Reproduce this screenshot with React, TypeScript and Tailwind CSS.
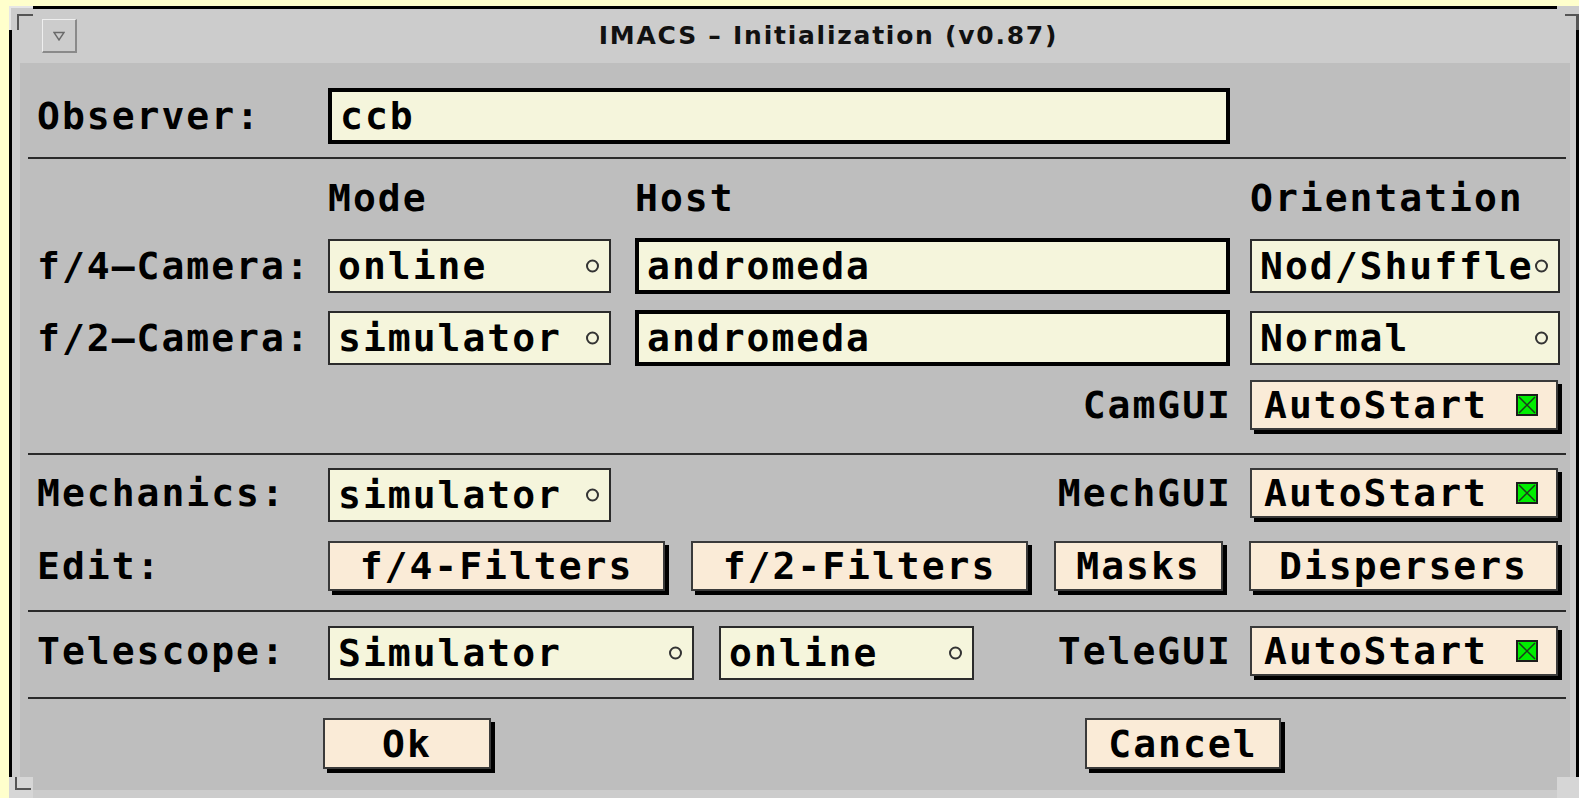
import React from 'react';

// Motif-style option menu: beige field with a small round indicator on the right
const OptionMenu = ({ value, className }: { value: string; className: string }) => (
	<div
		className={`relative h-[54px] shrink-0 bg-[#f5f5dc] border-[2px] border-[#2b2b2b] flex items-center pl-[8px] ${className}`}
	>
		<span className="whitespace-nowrap">{value}</span>
		<span className="absolute right-[10px] top-1/2 -translate-y-1/2 w-[13px] h-[13px] rounded-full border-[2px] border-[#333] bg-[#f5f5dc]" />
	</div>
);

const TextField = ({ value, className }: { value: string; className: string }) => (
	<div
		className={`h-[56px] shrink-0 bg-[#f5f5dc] border-[4px] border-black flex items-center pl-[8px] ${className}`}
	>
		{value}
	</div>
);

const PushButton = ({ label, className }: { label: string; className: string }) => (
	<div
		className={`h-[50px] shrink-0 bg-[#faebd7] border-[2px] border-[#3a3a3a] shadow-[4px_4px_0_#000] flex items-center justify-center ${className}`}
	>
		{label}
	</div>
);

const CheckMark = () => (
	<svg width="22" height="22" viewBox="0 0 22 22">
		<rect x="1" y="1" width="20" height="20" fill="#00ee00" stroke="#1c1c1c" strokeWidth="2" />
		<path d="M3 3 L19 19 M19 3 L3 19" stroke="#1c3a1c" strokeWidth="1.5" />
	</svg>
);

const AutoStart = () => (
	<div className="h-[50px] w-[308px] shrink-0 bg-[#faebd7] border-[2px] border-[#3a3a3a] shadow-[4px_4px_0_#000] flex items-center justify-between pl-[12px] pr-[18px]">
		<span>AutoStart</span>
		<CheckMark />
	</div>
);

const Separator = ({ className }: { className: string }) => (
	<div className={`h-[2px] ml-[8px] mr-[4px] bg-[#2a2a2a] ${className}`} />
);

const Label = ({ text }: { text: string }) => (
	<div className="w-[291px] shrink-0 h-[50px] flex items-center whitespace-nowrap">{text}</div>
);

const GuiLabel = ({ text }: { text: string }) => (
	<div className="flex-1 h-[50px] flex items-center justify-end pr-[18px] whitespace-nowrap">{text}</div>
);

export default function App() {
	return (
		<div className="w-full h-screen bg-[#ffffcc] overflow-hidden">
			<div className="relative ml-[9px] mt-[6px] w-[1570px] h-[792px] bg-[#cccccc] border-l-[3px] border-t-[3px] border-r-[3px] border-black flex flex-col pl-[8px] pr-[6px] pb-[8px]">
				{/* frame corners */}
				<div className="absolute -left-[3px] -top-[3px] w-[24px] h-[24px] bg-[#cccccc] border-l-[2px] border-t-[2px] border-[#e6e6e6]">
					<div className="absolute left-[6px] top-[6px] w-[16px] h-[16px] border-l-[2px] border-t-[2px] border-[#555]" />
				</div>
				<div className="absolute -right-[3px] -top-[3px] w-[22px] h-[24px] bg-[#cccccc]">
					<div className="absolute right-[0px] top-[8px] w-[14px] h-[16px] border-r-[3px] border-t-[2px] border-[#555]" />
				</div>
				<div className="absolute -left-[3px] bottom-0 w-[24px] h-[21px] bg-[#d6d6d6]">
					<div className="absolute left-[6px] top-0 w-[16px] h-[13px] border-l-[2px] border-b-[2px] border-[#555]" />
				</div>
				<div className="absolute -right-[3px] bottom-0 w-[22px] h-[21px] bg-[#d6d6d6]" />

				{/* title bar */}
				<div className="h-[54px] shrink-0 flex items-center">
					<div className="ml-[22px] w-[35px] h-[34px] border-t border-l border-[#efefef] border-r-[2px] border-b-[2px] border-r-[#8a8a8a] border-b-[#8a8a8a] flex items-center justify-center">
						<svg width="12" height="10" viewBox="0 0 12 10">
							<path d="M1 1.5 H11 L6 9 Z" fill="none" stroke="#6a6a6a" strokeWidth="1.4" />
						</svg>
					</div>
					<div className="flex-1 pl-[10px] text-center font-['DejaVu_Sans',sans-serif] font-bold text-[25px] tracking-[1.75px] text-[#111]">
						IMACS – Initialization (v0.87)
					</div>
				</div>

				{/* dialog body */}
				<div className="flex-1 bg-[#bebebe] flex flex-col font-['DejaVu_Sans_Mono',monospace] font-bold text-[38px] leading-[38px] tracking-[2px] text-black">
					<div className="mt-[25px] flex items-center pl-[17px]">
						<div className="w-[291px] shrink-0">Observer:</div>
						<TextField value="ccb" className="w-[902px]" />
					</div>

					<Separator className="mt-[13px]" />

					<div className="mt-[20px] h-[38px] flex pl-[17px]">
						<div className="w-[291px] shrink-0" />
						<div className="w-[307px] shrink-0">Mode</div>
						<div className="w-[615px] shrink-0">Host</div>
						<div>Orientation</div>
					</div>

					<div className="mt-[21px] flex items-center pl-[17px]">
						<div className="w-[291px] shrink-0 whitespace-nowrap">f/4–Camera:</div>
						<OptionMenu value="online" className="w-[283px]" />
						<TextField value="andromeda" className="ml-[24px] w-[595px]" />
						<OptionMenu value="Nod/Shuffle" className="ml-[20px] w-[310px]" />
					</div>

					<div className="mt-[16px] flex items-center pl-[17px]">
						<div className="w-[291px] shrink-0 whitespace-nowrap">f/2–Camera:</div>
						<OptionMenu value="simulator" className="w-[283px]" />
						<TextField value="andromeda" className="ml-[24px] w-[595px]" />
						<OptionMenu value="Normal" className="ml-[20px] w-[310px]" />
					</div>

					<div className="mt-[14px] h-[54px] flex items-start pr-[12px]">
						<GuiLabel text="CamGUI" />
						<AutoStart />
					</div>

					<Separator className="mt-[19px]" />

					<div className="mt-[13px] h-[54px] flex items-start pl-[17px] pr-[12px]">
						<Label text="Mechanics:" />
						<OptionMenu value="simulator" className="w-[283px]" />
						<GuiLabel text="MechGUI" />
						<AutoStart />
					</div>

					<div className="mt-[19px] h-[54px] flex items-start pl-[17px]">
						<Label text="Edit:" />
						<PushButton label="f/4-Filters" className="w-[337px]" />
						<PushButton label="f/2-Filters" className="ml-[26px] w-[337px]" />
						<PushButton label="Masks" className="ml-[26px] w-[169px]" />
						<PushButton label="Dispersers" className="ml-[26px] w-[309px]" />
					</div>

					<Separator className="mt-[15px]" />

					<div className="mt-[14px] h-[54px] flex items-start pl-[17px] pr-[12px]">
						<Label text="Telescope:" />
						<OptionMenu value="Simulator" className="w-[366px]" />
						<OptionMenu value="online" className="ml-[25px] w-[255px]" />
						<GuiLabel text="TeleGUI" />
						<AutoStart />
					</div>

					<Separator className="mt-[17px]" />

					<div className="mt-[19px] flex items-start">
						<PushButton label="Ok" className="ml-[303px] w-[168px] h-[51px]" />
						<PushButton label="Cancel" className="ml-[594px] w-[196px] h-[51px]" />
					</div>
				</div>
			</div>
		</div>
	);
}
